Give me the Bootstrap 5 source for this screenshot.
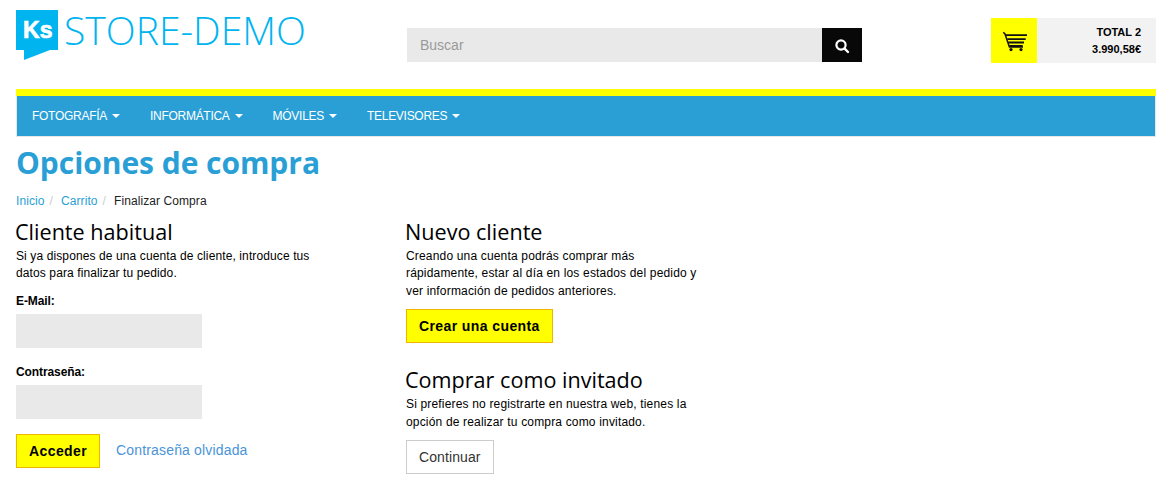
<!DOCTYPE html>
<html lang="es">
<head>
    <meta charset="UTF-8">
    <meta name="viewport" content="width=device-width, initial-scale=1.0">
    <title>Opciones de compra</title>
    <link href="https://cdn.jsdelivr.net/npm/bootstrap@5.3.0/dist/css/bootstrap.min.css" rel="stylesheet">
    <style>
        body { font-family: "Liberation Sans", Arial, sans-serif; font-size: 12px; line-height: 17.5px; letter-spacing: .085px; color: #000; overflow-x: hidden; }
        a { text-decoration: none; }
        .page-wrap { width: 1140px; margin-left: 16px; }
        .page-wrap .row { --bs-gutter-x: 30px; --bs-gutter-y: 0; }
        .top-row { height: 89px; }
        .logo-box { display: flex; align-items: flex-start; padding-top: 10px; }
        .logo-name { font-family: "Open Sans", sans-serif; font-weight: 300; font-size: 39.1px; line-height: 40px; letter-spacing: 0; color: #00b4f0; margin-left: 5px; }
        .search-box { margin: 28px 0 0 1px; width: 455px; height: 34px; }
        .search-input { height: 34px; border: 0; border-radius: 0; background: #e9e9e9; font-size: 14px; padding: 0 13px; }
        .search-input::placeholder { color: #999; }
        .search-btn { width: 40px; height: 34px; border: 0; border-radius: 0; background: #080808; padding: 0; }
        .cart-box { width: 165px; height: 45px; margin: 18px 0 0 auto; background: #f2f2f2; }
        .cart-ico { width: 46px; height: 45px; background: #ff0; }
        .cart-txt { flex: 1; text-align: right; font-weight: 700; font-size: 11px; line-height: 17px; letter-spacing: 0; padding: 6px 15px 0 0; color: #000; }
        .yellow-bar { height: 7px; background: #ff0; }
        .main-nav { height: 41px; background: #2a9fd6; border: 1px solid #e7e7e7; border-top: 0; padding: 0; }
        .main-nav .navbar-nav .nav-link { color: #fff; font-size: 12px; line-height: 17.5px; letter-spacing: -.28px; padding: 12px 15px 10px; text-transform: uppercase; }
        .main-nav .dropdown-toggle::after { vertical-align: 2px; margin-left: 5px; border-top-width: 4px; border-left-width: 4px; border-right-width: 4px; }
        .page-title { font-family: "Open Sans", sans-serif; font-weight: 700; font-size: 30px; line-height: 40px; letter-spacing: -.05px; color: #2a9fd6; margin: 6px 0 0; }
        .crumbs { margin: 10px 0 0; font-size: 12px; --bs-breadcrumb-divider-color: #ccc; --bs-breadcrumb-item-padding-x: 5px; --bs-breadcrumb-margin-bottom: 0; }
        .crumbs a { color: #2a9fd6; }
        .crumbs .breadcrumb-item.active { color: #222; padding-left: 5px; }
        .crumbs .breadcrumb-item + .breadcrumb-item { padding-left: 5px; }
        .crumbs .breadcrumb-item + .breadcrumb-item::before { padding-right: 8px; }
        .sec-title { font-family: "Open Sans", sans-serif; font-weight: 400; font-size: 21.6px; line-height: 24px; letter-spacing: 0; color: #000; margin: 0 0 4px -1px; }
        .first-sec { margin-top: 9px; }
        .next-sec { margin-top: 25px; }
        .intro { margin: 0; }
        .left-intro { max-width: 310px; letter-spacing: .11px; }
        .right-intro { max-width: 295px; letter-spacing: .17px; }
        .fld-label { display: block; font-weight: 700; line-height: 17px; margin-bottom: 4px; letter-spacing: -.1px; }
        .fld-input { width: 186px; height: 34px; border: 0; border-radius: 0; background: #e9e9e9; }
        .email-fld { margin-top: 10px; }
        .pass-fld { margin-top: 16px; }
        .btn-row { margin-top: 15px; }
        .btn-yellow { height: 34px; padding: 0 12px; font-size: 14px; line-height: 32px; font-weight: 700; letter-spacing: .4px; color: #000; background: #ff0; border: 1px solid #eeb600; border-radius: 0; }
        .btn-new { margin-top: 9px; }
        .btn-plain { height: 34px; margin-top: 9px; padding: 0 12px; font-size: 14px; line-height: 32px; letter-spacing: .1px; color: #333; background: #fff; border: 1px solid #ccc; border-radius: 0; }
        .forgot { font-size: 14px; letter-spacing: .16px; color: #4a94d8; margin: 1px 0 0 16px; }
    </style>
</head>
<body>
    <div class="page-wrap">
        <div class="row top-row">
            <div class="col-4">
                <a class="logo-box" href="#">
                    <svg width="43" height="50" viewBox="0 0 43 50">
                        <path d="M0 0H42V40H34L8 50V40H0Z" fill="#00b4f0"/>
                        <text x="7" y="28" font-family="Liberation Sans, sans-serif" font-weight="700" font-size="23" fill="#fff" stroke="#fff" stroke-width=".7">Ks</text>
                    </svg>
                    <span class="logo-name">STORE-DEMO</span>
                </a>
            </div>
            <div class="col-5">
                <form class="d-flex search-box">
                    <input class="form-control search-input" type="text" placeholder="Buscar">
                    <button class="btn search-btn flex-shrink-0" type="button" aria-label="Buscar">
                        <svg width="16" height="16" viewBox="0 0 16 16" fill="none" stroke="#fff">
                            <circle cx="7" cy="7" r="4.6" stroke-width="2.2"/>
                            <path d="M10.4 10.4L14 14" stroke-width="2.4" stroke-linecap="round"/>
                        </svg>
                    </button>
                </form>
            </div>
            <div class="col-3 d-flex">
                <div class="cart-box d-flex">
                    <div class="cart-ico d-flex align-items-center justify-content-center">
                        <svg width="26" height="22" viewBox="0 0 26 22" fill="none" stroke="#111">
                            <path d="M2.3 2.2L4 4 8.4 17H22" stroke-width="1.5"/>
                            <path d="M4 5.2H26M6.3 9.2H24.7M7.3 12.5H23M8.3 16H21.7" stroke-width="1.8"/>
                            <circle cx="10" cy="19.6" r="1.6" fill="#111" stroke="none"/>
                            <circle cx="20" cy="19.6" r="1.6" fill="#111" stroke="none"/>
                        </svg>
                    </div>
                    <div class="cart-txt">TOTAL 2<br>3.990,58€</div>
                </div>
            </div>
        </div>

        <div class="yellow-bar"></div>
        <nav class="navbar navbar-expand main-nav">
            <ul class="navbar-nav">
                <li class="nav-item dropdown"><a class="nav-link dropdown-toggle" href="#">Fotografía</a></li>
                <li class="nav-item dropdown"><a class="nav-link dropdown-toggle" href="#">Informática</a></li>
                <li class="nav-item dropdown"><a class="nav-link dropdown-toggle" href="#">Móviles</a></li>
                <li class="nav-item dropdown"><a class="nav-link dropdown-toggle" href="#">Televisores</a></li>
            </ul>
        </nav>

        <h1 class="page-title">Opciones de compra</h1>
        <ol class="breadcrumb crumbs">
            <li class="breadcrumb-item"><a href="#">Inicio</a></li>
            <li class="breadcrumb-item"><a href="#">Carrito</a></li>
            <li class="breadcrumb-item active">Finalizar Compra</li>
        </ol>

        <div class="row">
            <div class="col-4">
                <h2 class="sec-title first-sec">Cliente habitual</h2>
                <p class="intro left-intro">Si ya dispones de una cuenta de cliente, introduce tus datos para finalizar tu pedido.</p>
                <form>
                    <div class="email-fld">
                        <label class="fld-label">E-Mail:</label>
                        <input class="form-control fld-input" type="email">
                    </div>
                    <div class="pass-fld">
                        <label class="fld-label">Contraseña:</label>
                        <input class="form-control fld-input" type="password">
                    </div>
                    <div class="d-flex align-items-center btn-row">
                        <button class="btn btn-yellow" type="button">Acceder</button>
                        <a class="forgot" href="#">Contraseña olvidada</a>
                    </div>
                </form>
            </div>
            <div class="col-8">
                <h2 class="sec-title first-sec">Nuevo cliente</h2>
                <p class="intro right-intro">Creando una cuenta podrás comprar más rápidamente, estar al día en los estados del pedido y ver información de pedidos anteriores.</p>
                <button class="btn btn-yellow btn-new" type="button">Crear una cuenta</button>
                <h2 class="sec-title next-sec">Comprar como invitado</h2>
                <p class="intro right-intro">Si prefieres no registrarte en nuestra web, tienes la opción de realizar tu compra como invitado.</p>
                <button class="btn btn-plain" type="button">Continuar</button>
            </div>
        </div>
    </div>
    <script src="https://cdn.jsdelivr.net/npm/bootstrap@5.3.0/dist/js/bootstrap.bundle.min.js"></script>
</body>
</html>
